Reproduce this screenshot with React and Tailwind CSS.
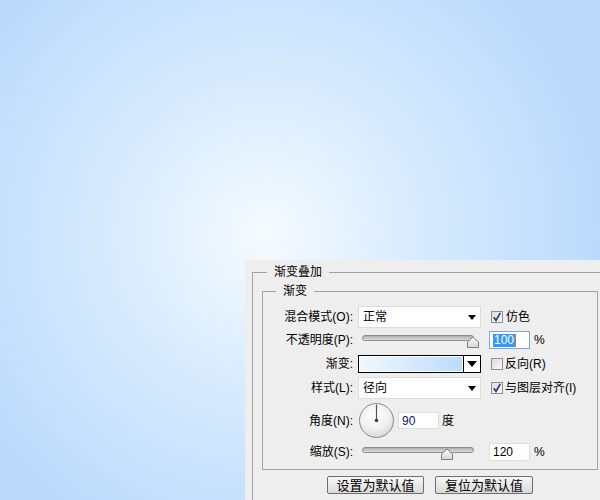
import React from "react";

const FONT = { fontFamily: '"Liberation Sans", "Noto Sans CJK SC", sans-serif' };

function Checkbox({ checked }) {
  return (
    <svg width="12" height="12" viewBox="0 0 12 12" className="shrink-0">
      <defs>
        <linearGradient id="cbg" x1="0" y1="0" x2="1" y2="1">
          <stop offset="0" stopColor="#dcdcdc" />
          <stop offset="1" stopColor="#fbfbfb" />
        </linearGradient>
      </defs>
      <rect x="0.5" y="0.5" width="11" height="11" fill="url(#cbg)" stroke="#8f8f8f" />
      {checked && (
        <path d="M2.8 6.2 L5 9.3 L9.3 1.8" fill="none" stroke="#2c3c82" strokeWidth="1.7" />
      )}
    </svg>
  );
}

function Slider({ pos }) {
  const t = 6;
  return (
    <svg width="123" height="18" viewBox="0 0 123 18" className="shrink-0">
      <defs>
        <linearGradient id={"tr" + pos} x1="0" y1="0" x2="0" y2="1">
          <stop offset="0" stopColor="#a9a9a9" />
          <stop offset="1" stopColor="#e2e2e2" />
        </linearGradient>
        <linearGradient id={"th" + pos} x1="0" y1="0" x2="0" y2="1">
          <stop offset="0" stopColor="#ffffff" />
          <stop offset="1" stopColor="#d4d4d4" />
        </linearGradient>
      </defs>
      <rect x="4.5" y="4.5" width="111" height="5" rx="2.5" fill={"url(#tr" + pos + ")"} stroke="#8e8e8e" />
      <path
        d={`M${pos} ${t} L${pos + 5.5} ${t + 5} L${pos + 5.5} ${t + 10.5} L${pos - 5.5} ${t + 10.5} L${pos - 5.5} ${t + 5} Z`}
        fill={"url(#th" + pos + ")"}
        stroke="#7c7c7c"
      />
    </svg>
  );
}

function Select({ value }) {
  return (
    <div className="w-[123px] h-[22px] bg-white border border-[#dcdcdc] flex items-center justify-between pl-[4px] pr-[4px]">
      <span className="text-[12px] leading-none text-black">{value}</span>
      <svg width="8" height="5" viewBox="0 0 8 5">
        <path d="M0 0 L8 0 L4 5 Z" fill="#000" />
      </svg>
    </div>
  );
}

function Label({ children }) {
  return (
    <div className="w-[90px] text-right text-[12px] leading-none text-black whitespace-nowrap">{children}</div>
  );
}

function NumInput({ children, focused }) {
  return (
    <div
      className={
        "w-[41px] h-[18px] bg-white border flex items-center pl-[3px] text-[12px] leading-none " +
        (focused ? "border-[#7aa9d8]" : "border-[#dedede]")
      }
    >
      {children}
    </div>
  );
}

export default function App() {
  return (
    <div
      style={FONT}
      className="w-[600px] h-[500px] overflow-hidden flex flex-col items-end justify-end bg-[radial-gradient(circle_at_265px_235px,#f6fbff_0px,#dcedfd_130px,#bcdbfc_330px)]"
    >
      <div className="w-[355px] h-[240px] bg-[#eeeeee] pl-[7px] pt-[12px] flex flex-col">
        <div className="relative flex-1 border-l border-t border-[#a3a3a3]">
          <span className="absolute left-[14px] top-[-9px] px-[7px] bg-[#eeeeee] text-[12px] leading-[16px] text-black">
            渐变叠加
          </span>

          <div className="relative ml-[9px] mt-[18px] w-[336px] h-[179px] border border-[#a3a3a3] pt-[14px]">
            <span className="absolute left-[13px] top-[-9px] px-[7px] bg-[#eeeeee] text-[12px] leading-[16px] text-black">
              渐变
            </span>

            {/* Row 1 */}
            <div className="flex items-center h-[22px]">
              <Label>混合模式(O):</Label>
              <div className="ml-[5px]">
                <Select value="正常" />
              </div>
              <div className="ml-[10px] flex items-center">
                <Checkbox checked />
                <span className="ml-[3px] text-[12px] leading-none">仿色</span>
              </div>
            </div>

            {/* Row 2 */}
            <div className="flex items-center h-[18px] mt-[3px]">
              <Label>不透明度(P):</Label>
              <div className="ml-[5px]">
                <Slider pos={115} />
              </div>
              <div className="ml-[8px]">
                <NumInput focused>
                  <span className="bg-[#3399ff] text-white leading-[13px] px-[1px]">100</span>
                  <span className="w-px h-[13px] bg-[#d07a20]" />
                </NumInput>
              </div>
              <span className="ml-[4px] text-[12px] leading-none">%</span>
            </div>

            {/* Row 3 */}
            <div className="flex items-center h-[18px] mt-[6px]">
              <Label>渐变:</Label>
              <div className="ml-[5px] w-[123px] h-[18px] border border-black flex">
                <div className="flex-1 bg-white p-[1px]">
                  <div className="w-full h-full bg-[linear-gradient(to_right,#f0f8ff,#bcdbfc)]" />
                </div>
                <div className="w-[17px] border-l border-black bg-white flex items-center justify-center">
                  <svg width="10" height="6" viewBox="0 0 10 6">
                    <path d="M0 0 L10 0 L5 6 Z" fill="#000" />
                  </svg>
                </div>
              </div>
              <div className="ml-[10px] flex items-center">
                <Checkbox />
                <span className="ml-[2px] text-[12px] leading-none">反向(R)</span>
              </div>
            </div>

            {/* Row 4 */}
            <div className="flex items-center h-[22px] mt-[4px]">
              <Label>样式(L):</Label>
              <div className="ml-[5px]">
                <Select value="径向" />
              </div>
              <div className="ml-[10px] flex items-center">
                <Checkbox checked />
                <span className="ml-[2px] text-[12px] leading-none whitespace-nowrap">与图层对齐(I)</span>
              </div>
            </div>

            {/* Row 5 */}
            <div className="flex items-center h-[35px] mt-[4px]">
              <Label>角度(N):</Label>
              <div className="ml-[6px]">
                <svg width="35" height="35" viewBox="0 0 35 35">
                  <defs>
                    <radialGradient id="dial" cx="0.45" cy="0.35" r="0.7">
                      <stop offset="0" stopColor="#ffffff" />
                      <stop offset="0.6" stopColor="#f0f0f0" />
                      <stop offset="1" stopColor="#d2d2d2" />
                    </radialGradient>
                  </defs>
                  <circle cx="17.5" cy="17.5" r="17" fill="url(#dial)" stroke="#8a8a8a" />
                  <line x1="17.5" y1="17.5" x2="17.5" y2="1.5" stroke="#555" strokeWidth="1.2" />
                  <circle cx="17.5" cy="17.5" r="1.8" fill="#444" />
                </svg>
              </div>
              <div className="ml-[4px]">
                <div className="w-[41px] h-[17px] bg-white border border-[#dedede] flex items-center pl-[3px] text-[12px] leading-none text-[#14146a]">
                  90
                </div>
              </div>
              <span className="ml-[3px] text-[12px] leading-none">度</span>
            </div>

            {/* Row 6 */}
            <div className="flex items-center h-[18px] mt-[5px]">
              <Label>缩放(S):</Label>
              <div className="ml-[5px]">
                <Slider pos={89} />
              </div>
              <div className="ml-[8px]">
                <NumInput>
                  <span className="text-black">120</span>
                </NumInput>
              </div>
              <span className="ml-[4px] text-[12px] leading-none">%</span>
            </div>
          </div>

          <div className="ml-[9px] w-[336px] mt-[6px] flex justify-center gap-[11px]">
            <button className="w-[97px] h-[18px] rounded-[2px] border border-[#6e6e6e] bg-[linear-gradient(#f7f7f7,#dadada)] text-[13px] leading-none text-black">
              设置为默认值
            </button>
            <button className="w-[98px] h-[18px] rounded-[2px] border border-[#6e6e6e] bg-[linear-gradient(#f7f7f7,#dadada)] text-[13px] leading-none text-black">
              复位为默认值
            </button>
          </div>
        </div>
      </div>
    </div>
  );
}
